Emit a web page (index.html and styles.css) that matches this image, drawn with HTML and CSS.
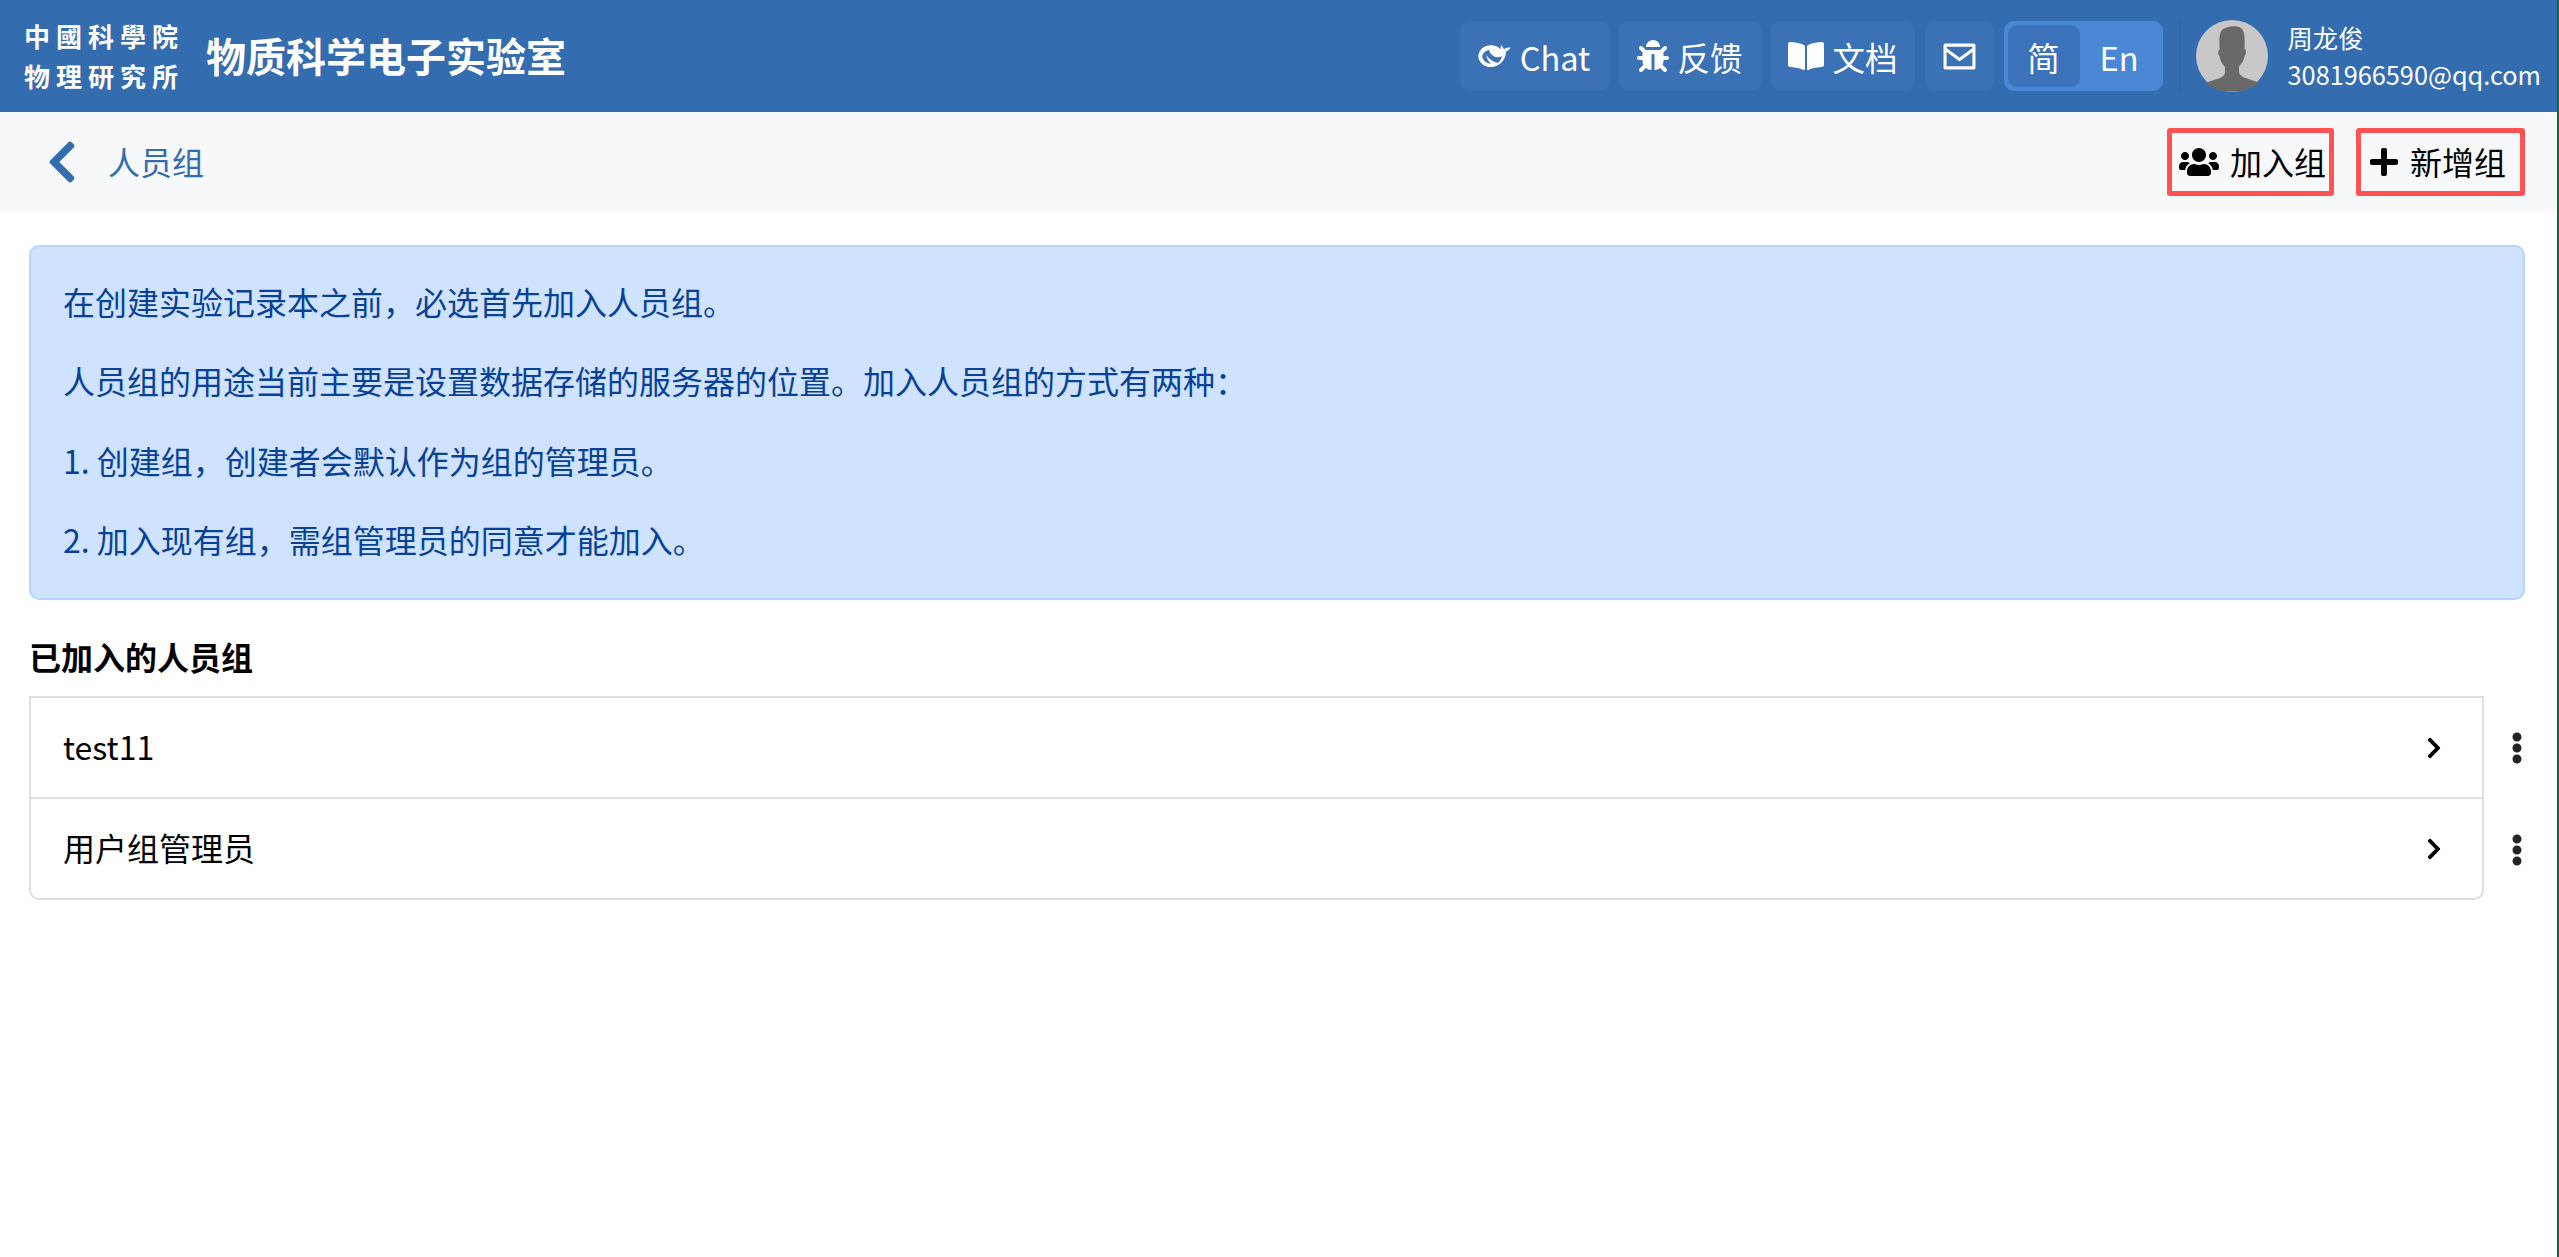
FILE: index.html
```html
<!DOCTYPE html>
<html lang="zh">
<head>
<meta charset="utf-8">
<title>物质科学电子实验室</title>
<link rel="stylesheet" href="styles.css">
</head>
<body>
<div class="page">
  <header class="topbar">
    <div class="brand">
      <div class="logo"><span>中國科學院</span><span>物理研究所</span></div>
      <div class="site-title">物质科学电子实验室</div>
    </div>
    <nav class="nav">
      <a class="nav-btn nav-chat">
        <svg class="ic-whale" viewBox="0 0 92 66"><path fill="#fff" fill-rule="evenodd" d="M1 32C3 13 20 1 40 3c10 1 17 5 23 11L64 2c4 4 7 8 8 12 6-4 13-6 19-4-3 4-8 9-14 11 2 7-2 19-10 29-7 8-19 14-31 14C18 64 0 50 1 32zM12 36c2 10 12 18 24 19-6-7-12-15-13-25 7 10 19 20 33 22 6-5 10-12 11-19-7 5-17 5-25-1-6-4-10-10-11-16-11 2-20 10-19 20z"/></svg>
        <span>Chat</span>
      </a>
      <a class="nav-btn nav-feedback">
        <svg class="ic-bug" viewBox="0 0 512 512"><path fill="#fff" d="M511.988 288.9c-.478 17.43-15.217 31.1-32.653 31.1H424v16c0 21.864-4.882 42.584-13.6 61.145l60.228 60.228c12.496 12.497 12.496 32.758 0 45.255-12.498 12.497-32.759 12.496-45.256 0l-54.736-54.736C345.886 467.965 314.351 480 280 480V236c0-6.627-5.373-12-12-12h-24c-6.627 0-12 5.373-12 12v244c-34.351 0-65.886-12.035-90.636-32.108l-54.736 54.736c-12.498 12.497-32.759 12.496-45.256 0-12.496-12.497-12.496-32.758 0-45.255l60.228-60.228C92.882 378.584 88 357.864 88 336v-16H32.666C15.23 320 .491 306.33.013 288.9-.484 270.816 14.028 256 32 256h56v-58.745l-46.628-46.628c-12.496-12.497-12.496-32.758 0-45.255 12.498-12.497 32.758-12.497 45.256 0L141.255 160h229.489l54.627-54.627c12.498-12.497 32.758-12.497 45.256 0 12.496 12.497 12.496 32.758 0 45.255L424 197.255V256h55.988c17.972 0 32.484 14.816 32 32.9zM257 0c-61.856 0-112 50.144-112 112h224C369 50.144 318.856 0 257 0z"/></svg>
        <span>反馈</span>
      </a>
      <a class="nav-btn nav-docs">
        <svg class="ic-book" viewBox="0 0 576 512"><path fill="#fff" d="M542.22 32.05c-54.8 3.11-163.72 14.43-230.96 55.59-4.64 2.84-7.27 7.89-7.27 13.17v363.87c0 11.55 12.63 18.85 23.28 13.49 69.18-34.82 169.23-44.32 218.7-46.92 16.89-.89 30.02-14.43 30.02-30.66V62.75c.01-17.71-15.35-31.74-33.77-30.7zM264.73 87.64C197.5 46.48 88.58 35.17 33.78 32.05 15.36 31.01 0 45.04 0 62.75V400.6c0 16.24 13.13 29.78 30.02 30.66 49.49 2.6 149.59 12.11 218.77 46.95 10.62 5.35 23.21-1.94 23.21-13.46V100.63c0-5.29-2.62-10.14-7.27-12.99z"/></svg>
        <span>文档</span>
      </a>
      <a class="nav-btn nav-mail">
        <svg class="ic-mail" viewBox="0 0 32 26"><path fill="none" stroke="#fff" stroke-width="3" stroke-linejoin="round" d="M2 2h28v22H2zM2.500 6l13.500 10L29.500 6"/></svg>
      </a>
      <div class="lang">
        <span class="lang-item lang-on">简</span>
        <span class="lang-item">En</span>
      </div>
      <div class="divider"></div>
      <div class="user">
        <svg class="avatar" viewBox="0 0 72 72">
          <circle cx="36" cy="36" r="36" fill="#c8c8c8"/>
          <path fill="#696969" d="M9 63l15-5c3-1.500 5-3 5-6v-5c-3-3-5-7-5.500-11-1.200-1-1.500-3-1-5 .2-1 .6-1.500 1.200-1.500C23 20 23 12 27 9c5-3 14-4 18-1 4 3 4 12 3.500 21 .8 0 1.200.5 1.300 1.500.3 2 0 4-1 5-.8 4-2.800 8-5.800 11v5c0 3 2 4.500 5 6l15 5c-6.500 6-15 9-27 9-12 0-20.500-3-27-9z"/>
        </svg>
        <div class="user-text">
          <div class="user-name">周龙俊</div>
          <div class="user-mail">3081966590@qq.com</div>
        </div>
      </div>
    </nav>
  </header>

  <div class="subbar">
    <div class="crumb">
      <svg class="ic-back" viewBox="0 0 320 512"><path fill="#346cb0" d="M34.52 239.030L228.870 44.690c9.370-9.370 24.570-9.370 33.940 0l22.670 22.670c9.360 9.360 9.370 24.520.04 33.900L131.490 256l154.020 154.750c9.340 9.380 9.320 24.540-.04 33.900l-22.670 22.670c-9.370 9.370-24.570 9.370-33.940 0L34.520 272.970c-9.370-9.370-9.370-24.570 0-33.940z"/></svg>
      <span class="crumb-text">人员组</span>
    </div>
    <div class="actions">
      <a class="act act-join">
        <svg class="ic-users" viewBox="0 0 640 512"><path d="M96 224c35.300 0 64-28.700 64-64s-28.700-64-64-64-64 28.700-64 64 28.700 64 64 64zm448 0c35.300 0 64-28.700 64-64s-28.700-64-64-64-64 28.700-64 64 28.700 64 64 64zm32 32h-64c-17.600 0-33.500 7.100-45.100 18.600 40.300 22.100 68.900 62 75.100 109.400h66c17.700 0 32-14.300 32-32v-32c0-35.300-28.700-64-64-64zm-256 0c61.900 0 112-50.100 112-112S381.900 32 320 32 208 82.100 208 144s50.100 112 112 112zm76.800 32h-8.300c-20.800 10-43.900 16-68.500 16s-47.600-6-68.500-16h-8.300C179.600 288 128 339.600 128 403.200V432c0 26.500 21.500 48 48 48h288c26.500 0 48-21.500 48-48v-28.800c0-63.600-51.600-115.200-115.200-115.200zm-223.700-13.400C161.500 263.100 145.600 256 128 256H64c-35.300 0-64 28.700-64 64v32c0 17.700 14.300 32 32 32h65.900c6.300-47.400 34.900-87.300 75.200-109.400z"/></svg>
        <span>加入组</span>
      </a>
      <a class="act act-new">
        <svg class="ic-plus" viewBox="0 0 448 512"><path d="M416 208H272V64c0-17.670-14.330-32-32-32h-32c-17.670 0-32 14.330-32 32v144H32c-17.670 0-32 14.330-32 32v32c0 17.670 14.330 32 32 32h144v144c0 17.670 14.330 32 32 32h32c17.670 0 32-14.330 32-32V304h144c17.670 0 32-14.330 32-32v-32c0-17.670-14.330-32-32-32z"/></svg>
        <span>新增组</span>
      </a>
    </div>
  </div>

  <main class="content">
    <section class="alert">
      <p>在创建实验记录本之前，必选首先加入人员组。</p>
      <p>人员组的用途当前主要是设置数据存储的服务器的位置。加入人员组的方式有两种：</p>
      <p>1. 创建组，创建者会默认作为组的管理员。</p>
      <p>2. 加入现有组，需组管理员的同意才能加入。</p>
    </section>
    <h2 class="section-title">已加入的人员组</h2>
    <div class="group-wrap">
      <ul class="group-list">
        <li class="group-row"><span class="row-label">test11</span><svg class="ic-next" viewBox="0 0 320 512"><path d="M285.476 272.971L91.132 467.314c-9.373 9.373-24.569 9.373-33.941 0l-22.667-22.667c-9.357-9.357-9.375-24.522-.04-33.901L188.505 256 34.484 101.255c-9.335-9.379-9.317-24.544.04-33.901l22.667-22.667c9.373-9.373 24.569-9.373 33.941 0L285.475 239.030c9.373 9.372 9.373 24.568.001 33.941z"/></svg></li>
        <li class="group-row"><span class="row-label">用户组管理员</span><svg class="ic-next" viewBox="0 0 320 512"><path d="M285.476 272.971L91.132 467.314c-9.373 9.373-24.569 9.373-33.941 0l-22.667-22.667c-9.357-9.357-9.375-24.522-.04-33.901L188.505 256 34.484 101.255c-9.335-9.379-9.317-24.544.04-33.901l22.667-22.667c9.373-9.373 24.569-9.373 33.941 0L285.475 239.030c9.373 9.372 9.373 24.568.001 33.941z"/></svg></li>
      </ul>
      <div class="more-col">
        <svg class="ic-more" viewBox="0 0 192 512"><path fill="#212529" d="M96 184c39.800 0 72 32.200 72 72s-32.200 72-72 72-72-32.200-72-72 32.200-72 72-72zM24 80c0 39.800 32.200 72 72 72s72-32.200 72-72S135.800 8 96 8 24 40.200 24 80zm0 352c0 39.800 32.200 72 72 72s72-32.200 72-72-32.200-72-72-72-72 32.200-72 72z"/></svg>
        <svg class="ic-more" viewBox="0 0 192 512"><path fill="#212529" d="M96 184c39.800 0 72 32.200 72 72s-32.200 72-72 72-72-32.200-72-72 32.200-72 72-72zM24 80c0 39.800 32.200 72 72 72s72-32.200 72-72S135.800 8 96 8 24 40.200 24 80zm0 352c0 39.800 32.200 72 72 72s72-32.200 72-72-32.200-72-72-72-72 32.200-72 72z"/></svg>
      </div>
    </div>
  </main>
</div>
</body>
</html>
```
FILE: styles.css
```css
* { box-sizing: border-box; }
html, body { margin: 0; height: 100%; overflow: hidden; }
body {
  background: #1a6338;
  font-family: "Noto Sans CJK SC", "Noto Sans", sans-serif;
  color: #000;
  font-size: 24px;
}
.page { height: 1257px; width: 2557px; background: #fff; }

.topbar {
  height: 112px;
  background: #346cb0;
  color: #fff;
  display: flex;
  align-items: center;
  justify-content: space-between;
  padding: 0 16px 0 24px;
}
.brand { display: flex; align-items: center; }
.logo {
  display: flex;
  flex-direction: column;
  gap: 6px;
  font-family: "Noto Sans CJK TC", sans-serif;
  font-size: 26px;
  font-weight: 700;
  line-height: 34px;
  letter-spacing: 6px;
  width: 179px;
}
.site-title { font-size: 40px; font-weight: 700; line-height: 50px; margin: 0 0 3px 3px; }
.nav { display: flex; align-items: center; }
.nav-btn {
  height: 70px;
  display: flex;
  align-items: center;
  justify-content: center;
  gap: 9px;
  margin-right: 10px;
  border-radius: 9px;
  background: #3a72b5;
  font-size: 32.5px;
}
.nav-chat { width: 149px; }
.nav-feedback { width: 142px; }
.nav-docs { width: 144px; }
.nav-mail { width: 69px; }
.ic-whale { width: 33px; height: 24px; }
.ic-bug { width: 32px; height: 32px; }
.ic-book { width: 36px; height: 32px; }
.ic-mail { width: 33px; height: 27px; }
.lang {
  width: 159px;
  height: 70px;
  background: #4a87d4;
  border-radius: 10px;
  display: flex;
  align-items: center;
  padding: 4px;
  font-size: 32.5px;
}
.lang-item { flex: 1; height: 62px; display: flex; align-items: center; justify-content: center; border-radius: 9px; }
.lang-on { flex: 0 0 72px; background: #3b72ba; }
.divider { width: 1px; height: 72px; background: #2f64a6; margin: 0 16px; }
.user { display: flex; align-items: center; gap: 20px; }
.avatar { width: 72px; height: 72px; display: block; }
.user-text { font-size: 25.3px; line-height: 37px; }

.subbar {
  height: 100px;
  background: #f7f8fa;
  display: flex;
  align-items: center;
  justify-content: space-between;
  padding: 0 32px 0 47px;
}
.crumb { display: flex; align-items: center; }
.ic-back { width: 30px; height: 48px; }
.crumb-text { color: #346cb0; font-size: 32px; margin: 0 0 2px 31px; }
.actions { display: flex; gap: 22px; }
.act {
  height: 68px;
  border: 5px solid #ff5252;
  border-radius: 3px;
  display: flex;
  align-items: center;
  gap: 11px;
  font-size: 32px;
}
.act span { padding-bottom: 2px; }
.act-join { width: 167px; padding-left: 7px; }
.act-new { width: 169px; padding-left: 9px; gap: 12px; }
.ic-users { width: 40px; height: 32px; }
.ic-plus { width: 28px; height: 32px; }

.content { padding: 33px 32px 0 29px; }
.alert {
  height: 355px;
  background: #cfe2ff;
  border: 2px solid #b6d4fe;
  border-radius: 10px;
  color: #084298;
  padding: 30px 32px;
  font-size: 32px;
}
.alert p { margin: 0 0 31.4px; line-height: 48px; }
.section-title { margin: 36px 0 0; font-size: 32px; font-weight: 700; line-height: 40px; color: #000; }
.group-wrap { display: flex; margin-top: 20px; }
.group-list {
  list-style: none;
  margin: 0;
  padding: 0;
  width: 2455px;
  border: 2px solid #dedede;
  border-radius: 0 0 10px 10px;
}
.group-row {
  height: 99px;
  display: flex;
  align-items: center;
  justify-content: space-between;
  padding: 0 40px 0 32px;
  font-size: 32px;
}
.group-row + .group-row { border-top: 2px solid #dedede; height: 101px; }
.row-label { padding-bottom: 4px; }
.ic-next { width: 16px; height: 24px; }
.more-col { flex: 1; display: flex; flex-direction: column; align-items: flex-end; padding: 36px 2px 0 0; gap: 70px; }
.ic-more { width: 12px; height: 32px; display: block; }
```
